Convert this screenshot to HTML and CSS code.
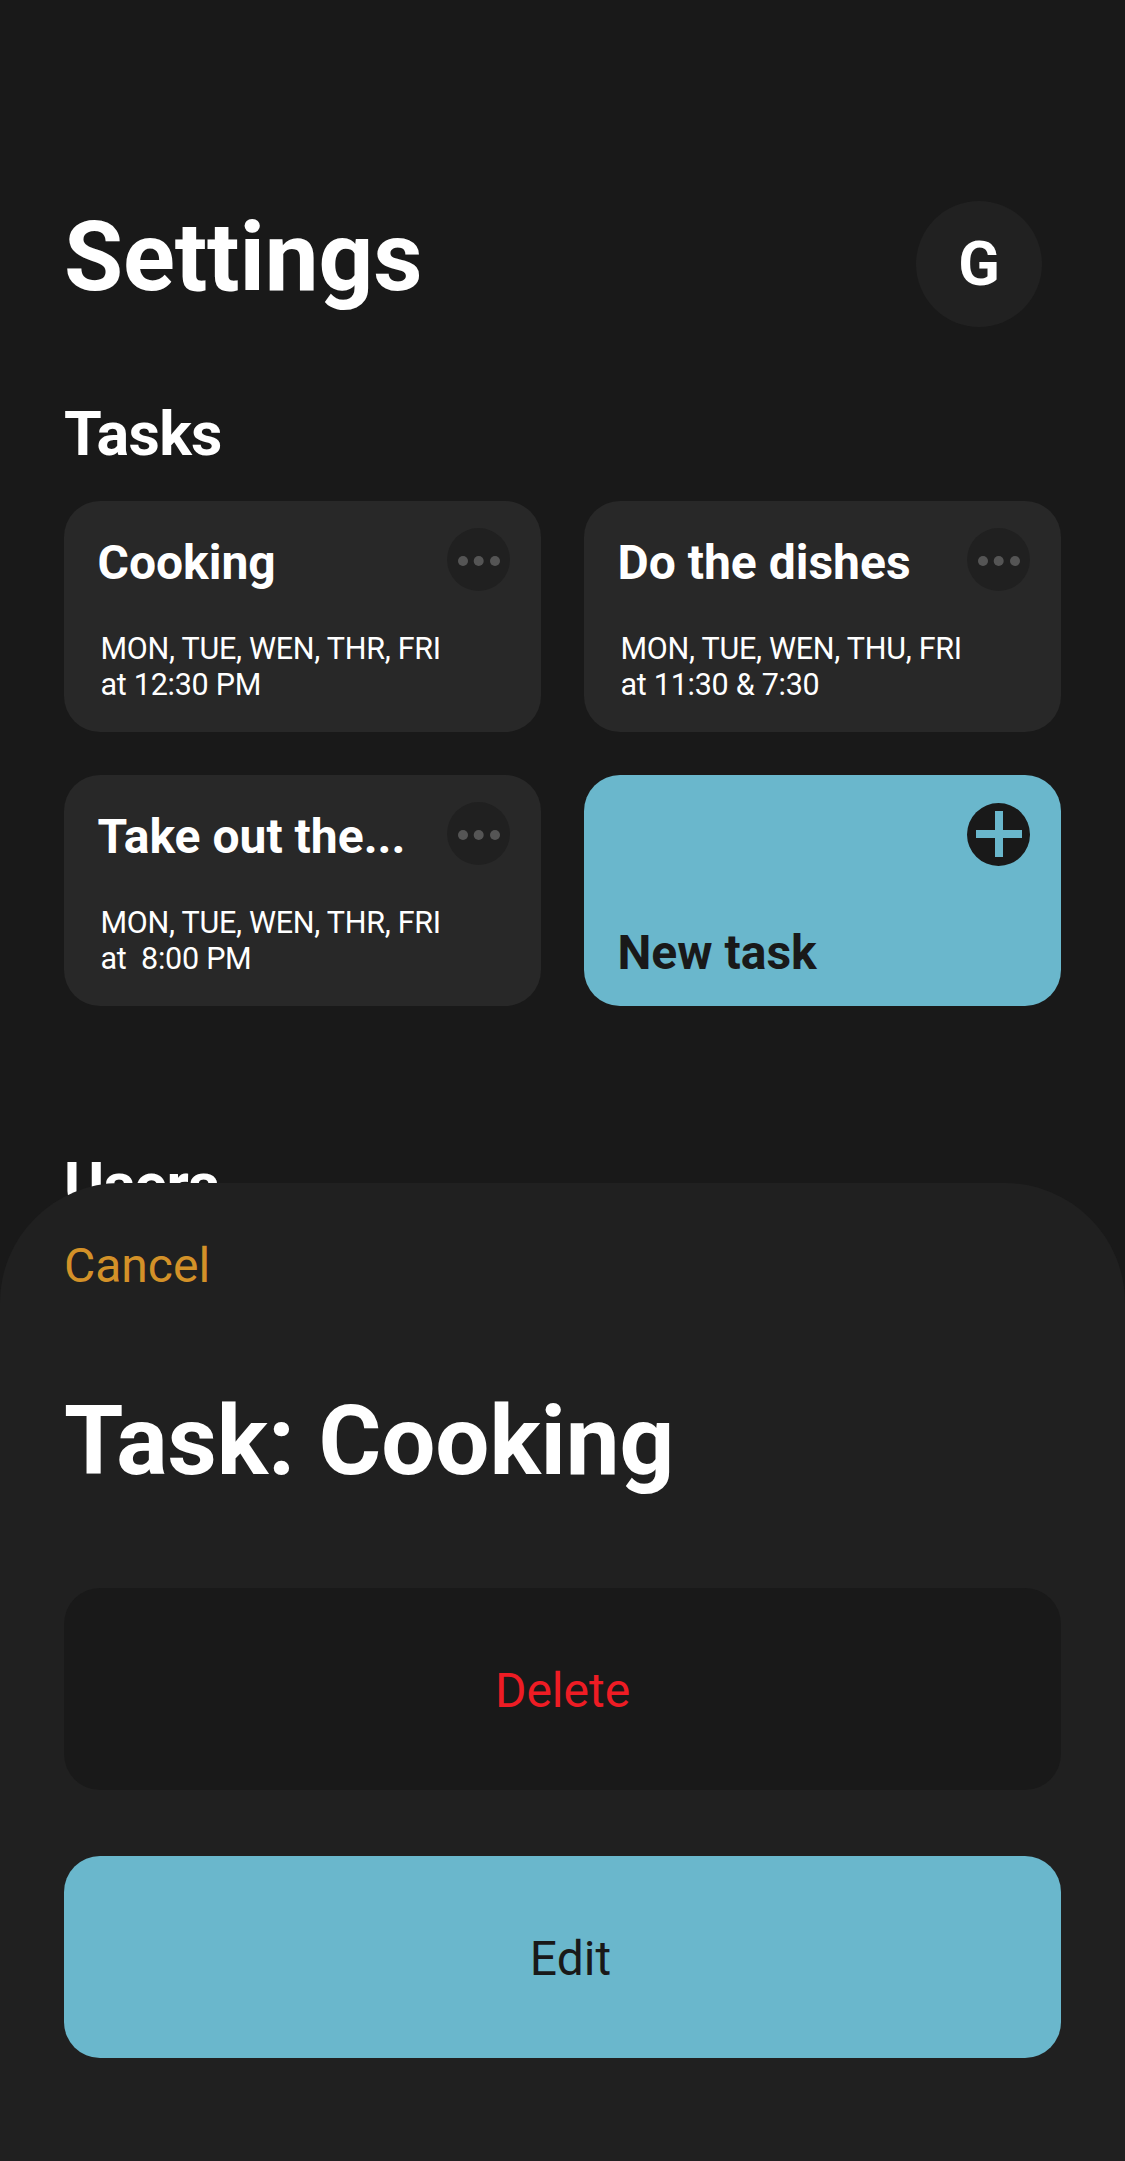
FILE: index.html
```html
<!DOCTYPE html>
<html lang="en">
<head>
<meta charset="utf-8">
<meta name="viewport" content="width=device-width, initial-scale=1">
<title>Settings</title>
<link rel="stylesheet" href="styles.css">
</head>
<body>
<div class="screen">
  <main class="page">
    <header class="page-header">
      <h1 class="title">Settings</h1>
      <div class="avatar">G</div>
    </header>
    <section class="tasks">
      <h2 class="section-title">Tasks</h2>
      <div class="task-grid">
        <article class="card">
          <div class="card-top">
            <h3 class="card-title">Cooking</h3>
            <svg class="menu" viewBox="0 0 63 63" role="img" aria-label="More"><circle class="menu-disc" cx="31.5" cy="31.5" r="31.5"/><circle cx="16" cy="33" r="5"/><circle cx="31.7" cy="33" r="5"/><circle cx="48" cy="33" r="5"/></svg>
          </div>
          <p class="schedule">MON, TUE, WEN, THR, FRI
at 12:30 PM</p>
        </article>
        <article class="card">
          <div class="card-top">
            <h3 class="card-title">Do the dishes</h3>
            <svg class="menu" viewBox="0 0 63 63" role="img" aria-label="More"><circle class="menu-disc" cx="31.5" cy="31.5" r="31.5"/><circle cx="16" cy="33" r="5"/><circle cx="31.7" cy="33" r="5"/><circle cx="48" cy="33" r="5"/></svg>
          </div>
          <p class="schedule">MON, TUE, WEN, THU, FRI
at 11:30 &amp; 7:30</p>
        </article>
        <article class="card">
          <div class="card-top">
            <h3 class="card-title">Take out the...</h3>
            <svg class="menu" viewBox="0 0 63 63" role="img" aria-label="More"><circle class="menu-disc" cx="31.5" cy="31.5" r="31.5"/><circle cx="16" cy="33" r="5"/><circle cx="31.7" cy="33" r="5"/><circle cx="48" cy="33" r="5"/></svg>
          </div>
          <p class="schedule">MON, TUE, WEN, THR, FRI
at  8:00 PM</p>
        </article>
        <article class="card card-new">
          <svg class="add" viewBox="0 0 63 63" role="img" aria-label="Add"><circle cx="31.5" cy="31.5" r="31.5"/><path d="M9 27h19V8h8v19h19v8H36v19h-8V35H9z"/></svg>
          <h3 class="card-title">New task</h3>
        </article>
      </div>
    </section>
    <section class="users">
      <h2 class="section-title">Users</h2>
    </section>
  </main>
  <div class="sheet" role="dialog">
    <a class="cancel">Cancel</a>
    <h2 class="sheet-title">Task: Cooking</h2>
    <div class="actions">
      <button class="action delete">Delete</button>
      <button class="action edit">Edit</button>
    </div>
  </div>
</div>
</body>
</html>
```

FILE: styles.css
```css
* { box-sizing: border-box; }

body, h1, h2, h3, p { margin: 0; }

body {
  background: #191919;
  color: #fff;
  font-family: Roboto, sans-serif;
}

.screen {
  position: relative;
  height: 2161px;
  overflow: hidden;
}

.page { padding: 201px 64px 0; }

.page-header {
  display: flex;
  justify-content: space-between;
  height: 126px;
  padding-right: 19px;
}

.title, .sheet-title {
  font-size: 96px;
  font-weight: 700;
  letter-spacing: -0.12px;
  line-height: 112px;
}

.avatar {
  width: 126px;
  height: 126px;
  border-radius: 50%;
  background: #212121;
  font-size: 61px;
  font-weight: 700;
  line-height: 126px;
  text-align: center;
}

.tasks { margin-top: 72px; }

.section-title {
  font-size: 61px;
  font-weight: 700;
  letter-spacing: -0.7px;
  line-height: 71px;
}

.task-grid {
  display: grid;
  grid-template-columns: 477px 477px;
  grid-auto-rows: 231px;
  gap: 43px;
  margin-top: 31px;
}

.card {
  display: flex;
  flex-direction: column;
  padding: 27px 31px 0 33.5px;
  border-radius: 36px;
  background: #282828;
}

.card-top {
  display: flex;
  justify-content: space-between;
}

.card-title {
  padding-top: 6px;
  font-size: 48px;
  font-weight: 700;
  line-height: 57px;
}

.menu, .add {
  flex: none;
  width: 63px;
  height: 63px;
}

.menu { fill: #555; }

.menu-disc { fill: #202020; }

.schedule {
  margin: 40px 0 0 3px;
  font-size: 30.5px;
  letter-spacing: -0.27px;
  line-height: 36px;
  white-space: pre;
}

.card-new {
  padding-top: 28px;
  background: #6ab7cc;
  color: #191919;
}

.card-new .card-title { margin-top: 52px; }

.add {
  align-self: flex-end;
  fill: #191919;
}

.add path { fill: #6ab7cc; }

.users { margin-top: 144px; }

.sheet {
  position: absolute;
  inset: 1183px 0 0;
  padding: 54px 64px 0;
  border-radius: 120px 120px 0 0;
  background: #202020;
}

.cancel {
  display: block;
  color: #d39128;
  font-size: 48px;
  line-height: 57px;
}

.sheet-title { margin-top: 91px; }

.actions {
  display: flex;
  flex-direction: column;
  gap: 66px;
  margin-top: 91px;
}

.action {
  height: 202px;
  padding: 3px 0 0;
  border: 0;
  border-radius: 36px;
  font: 400 48px/57px Roboto, sans-serif;
}

.delete {
  background: #191919;
  color: #ee1c24;
}

.edit {
  padding-left: 16px;
  background: #6ab7cc;
  color: #191919;
}
```
